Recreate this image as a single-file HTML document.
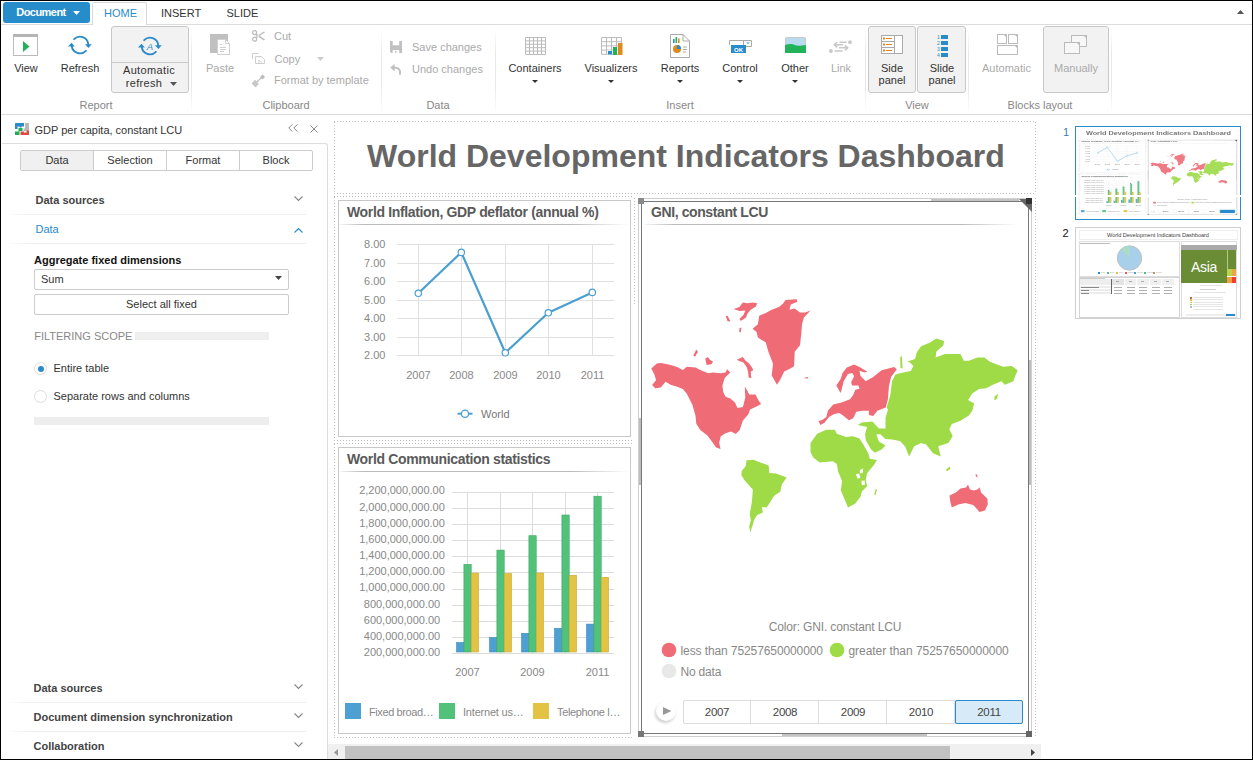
<!DOCTYPE html>
<html><head><meta charset="utf-8"><style>
html,body{margin:0;padding:0;}
body{width:1253px;height:760px;overflow:hidden;position:relative;background:#fff;font-family:"Liberation Sans", sans-serif;}
.t{position:absolute;white-space:nowrap;}
.r{position:absolute;}
#frame{position:absolute;left:0;top:0;width:1253px;height:760px;border:1px solid #000;box-sizing:border-box;z-index:100;pointer-events:none}
</style></head><body>
<div class="r" style="left:0px;top:24px;width:1253px;height:1px;background:#dcdcdc"></div>
<div class="r" style="left:92px;top:2px;width:55px;height:23px;background:#fff;border:1px solid #d8d8d8;border-bottom:none;box-sizing:border-box;border-radius:2px 2px 0 0"></div>
<div class="r" style="left:3px;top:2px;width:87px;height:21px;background:#268dca;border-radius:3px"></div>
<div class="t" style="left:16.3px;top:6.69px;font-size:11px;line-height:11px;color:#fff;font-weight:700;letter-spacing:-0.55px;">Document</div>
<svg class="r" style="left:73px;top:11px;" width="7" height="4" viewBox="0 0 7 4"><path d="M0 0H7L3.5 4Z" fill="#fff"/></svg>
<div class="t" style="left:104px;top:7.69px;font-size:11px;line-height:11px;color:#2a8bca;">HOME</div>
<div class="t" style="left:161px;top:7.69px;font-size:11px;line-height:11px;color:#333;">INSERT</div>
<div class="t" style="left:226.5px;top:7.69px;font-size:11px;line-height:11px;color:#333;">SLIDE</div>
<svg class="r" style="left:1237px;top:10px;" width="7" height="4" viewBox="0 0 7 4"><path d="M0 4H7L3.5 0Z" fill="#555"/></svg>
<div class="r" style="left:0px;top:114px;width:1253px;height:1px;background:#dcdcdc"></div>
<div class="r" style="left:191px;top:28px;width:1px;height:84px;background:linear-gradient(#fff,#e8e8e8 30%,#e8e8e8 70%,#fff)"></div>
<div class="r" style="left:381px;top:28px;width:1px;height:84px;background:linear-gradient(#fff,#e8e8e8 30%,#e8e8e8 70%,#fff)"></div>
<div class="r" style="left:495px;top:28px;width:1px;height:84px;background:linear-gradient(#fff,#e8e8e8 30%,#e8e8e8 70%,#fff)"></div>
<div class="r" style="left:865px;top:28px;width:1px;height:84px;background:linear-gradient(#fff,#e8e8e8 30%,#e8e8e8 70%,#fff)"></div>
<div class="r" style="left:968px;top:28px;width:1px;height:84px;background:linear-gradient(#fff,#e8e8e8 30%,#e8e8e8 70%,#fff)"></div>
<div class="r" style="left:1111px;top:28px;width:1px;height:84px;background:linear-gradient(#fff,#e8e8e8 30%,#e8e8e8 70%,#fff)"></div>
<div class="t" style="left:96px;top:99.69px;font-size:11px;line-height:11px;color:#888;width:120px;text-align:center;left:36.00px;">Report</div>
<div class="t" style="left:286px;top:99.69px;font-size:11px;line-height:11px;color:#888;width:120px;text-align:center;left:226.00px;">Clipboard</div>
<div class="t" style="left:438px;top:99.69px;font-size:11px;line-height:11px;color:#888;width:120px;text-align:center;left:378.00px;">Data</div>
<div class="t" style="left:680px;top:99.69px;font-size:11px;line-height:11px;color:#888;width:120px;text-align:center;left:620.00px;">Insert</div>
<div class="t" style="left:917px;top:99.69px;font-size:11px;line-height:11px;color:#888;width:120px;text-align:center;left:857.00px;">View</div>
<div class="t" style="left:1040px;top:99.69px;font-size:11px;line-height:11px;color:#888;width:120px;text-align:center;left:980.00px;">Blocks layout</div>
<div class="r" style="left:13px;top:34px;width:25px;height:22px;border:1px solid #bbb;box-sizing:border-box;background:#fff"></div>
<div class="r" style="left:13px;top:34px;width:25px;height:3px;background:#b5b5b5"></div>
<svg class="r" style="left:23px;top:41px;" width="7" height="11" viewBox="0 0 7 11"><path d="M0 0L6.5 5.5L0 11Z" fill="#22b35a"/></svg>
<div class="t" style="left:26px;top:62.69px;font-size:11px;line-height:11px;color:#333;width:60px;text-align:center;left:-4.00px;">View</div>
<svg class="r" style="left:68px;top:34px;" width="24" height="22" viewBox="0 0 24 22"><g fill="none" stroke="#2a8bca" stroke-width="1.9" stroke-linecap="round"><path d="M6.13 5.13A8.3 8.3 0 0 1 20.27 10.1"/><path d="M17.87 16.87A8.3 8.3 0 0 1 3.73 11.9"/></g><path d="M17 10.2H23.8L20.4 13.9Z" fill="#2a8bca"/><path d="M0 12.4H6.9L3.45 8.8Z" fill="#2a8bca"/></svg>
<div class="t" style="left:80px;top:62.69px;font-size:11px;line-height:11px;color:#333;width:60px;text-align:center;left:50.00px;">Refresh</div>
<div class="r" style="left:111px;top:26px;width:78px;height:67px;background:#f2f2f2;border:1px solid #c8c8c8;box-sizing:border-box;border-radius:3px"></div>
<div class="r" style="left:112px;top:62px;width:76px;height:1px;background:#c8c8c8"></div>
<svg class="r" style="left:138px;top:35px;" width="24" height="22" viewBox="0 0 24 22"><g fill="none" stroke="#2a8bca" stroke-width="1.9" stroke-linecap="round"><path d="M6.13 5.13A8.3 8.3 0 0 1 20.27 10.1"/><path d="M17.87 16.87A8.3 8.3 0 0 1 3.73 11.9"/></g><path d="M17 10.2H23.8L20.4 13.9Z" fill="#2a8bca"/><path d="M0 12.4H6.9L3.45 8.8Z" fill="#2a8bca"/><text x="12" y="14.6" font-family="Liberation Sans" font-size="9.5" font-style="italic" fill="#2a8bca" text-anchor="middle">A</text></svg>
<div class="t" style="left:149px;top:64.69px;font-size:11px;line-height:11px;color:#333;letter-spacing:0.35px;width:70px;text-align:center;left:114.00px;">Automatic</div>
<div class="t" style="left:144px;top:78.09px;font-size:11px;line-height:11px;color:#333;letter-spacing:0.3px;width:60px;text-align:center;left:114.00px;">refresh</div>
<svg class="r" style="left:170px;top:82px;" width="7" height="4" viewBox="0 0 7 4"><path d="M0 0H7L3.5 4Z" fill="#555"/></svg>
<svg class="r" style="left:210px;top:34px;" width="21" height="21" viewBox="0 0 21 21"><rect x="0" y="0" width="18" height="19" fill="#c0c0c0"/><path d="M7.5 5.5H15.5L19.5 9.5V20.5H7.5Z" fill="#fff" stroke="#d0d0d0" stroke-width="1"/><path d="M15.5 5.5V9.5H19.5" fill="none" stroke="#d0d0d0"/><path d="M10 10.5H12M10 13.5H16M10 15.5H16M10 17.5H14" stroke="#cfcfcf" stroke-width="1"/></svg>
<div class="t" style="left:220px;top:62.69px;font-size:11px;line-height:11px;color:#aaa;width:60px;text-align:center;left:190.00px;">Paste</div>
<svg class="r" style="left:252px;top:30px;" width="14" height="12" viewBox="0 0 14 12"><g fill="none" stroke="#bbb" stroke-width="1.2"><circle cx="2.6" cy="2.6" r="2"/><circle cx="2.6" cy="9.2" r="2"/></g><path d="M4.2 3.6L13 9.6L12 10.4L4 5.4ZM4.2 8.2L13 2.2L12 1.4L4 6.4Z" fill="#bbb"/></svg>
<div class="t" style="left:274px;top:30.69px;font-size:11px;line-height:11px;color:#aaa;">Cut</div>
<svg class="r" style="left:252px;top:53px;" width="14" height="12" viewBox="0 0 14 12"><g fill="none" stroke="#cfcfcf" stroke-width="1"><path d="M0.5 6V0.5H6.5"/><path d="M3.5 3.5H9.5L12.5 6.5V10.5H3.5Z" fill="#fff"/></g><path d="M6 7.5H8M6 9H10" stroke="#d5d5d5"/></svg>
<div class="t" style="left:274.5px;top:53.69px;font-size:11px;line-height:11px;color:#aaa;">Copy</div>
<svg class="r" style="left:317px;top:57px;" width="7" height="4" viewBox="0 0 7 4"><path d="M0 0H7L3.5 4Z" fill="#ccc"/></svg>
<svg class="r" style="left:251px;top:73px;" width="15" height="15" viewBox="0 0 15 15"><path d="M11.5 1.5L14 4L11.5 6.5L9 4Z" fill="#bbb"/><path d="M10 5L5.5 9.5L3.5 7.5" fill="none" stroke="#bbb" stroke-width="1.1"/><path d="M4 7L8 11L4.5 14.5L0.5 10.5Z" fill="#c8c8c8"/></svg>
<div class="t" style="left:274px;top:74.69px;font-size:11px;line-height:11px;color:#aaa;">Format by template</div>
<svg class="r" style="left:390px;top:41px;" width="12" height="12" viewBox="0 0 12 12"><path d="M0 0H12V12H1.5L0 10.5Z" fill="#c0c0c0"/><rect x="2.7" y="0" width="6.5" height="4.3" fill="#fff"/><rect x="2.7" y="9" width="6.5" height="3" fill="#fff"/><rect x="5.2" y="9.8" width="1.2" height="2.2" fill="#c0c0c0"/></svg>
<div class="t" style="left:412px;top:41.69px;font-size:11px;line-height:11px;color:#aaa;">Save changes</div>
<svg class="r" style="left:390px;top:64px;" width="12" height="11" viewBox="0 0 12 11"><path d="M0.2 3.6L4.6 0V7.4Z" fill="#c0c0c0"/><path d="M4 3.7H5.5A4.5 4.5 0 0 1 10 8.2V10.8" fill="none" stroke="#c0c0c0" stroke-width="2"/></svg>
<div class="t" style="left:412px;top:63.69px;font-size:11px;line-height:11px;color:#aaa;">Undo changes</div>
<svg class="r" style="left:525px;top:37px;" width="21" height="18" viewBox="0 0 21 18"><g fill="none" stroke="#bbb" stroke-width="1"><path d="M0.5 0.5H20.5"/><path d="M0.5 3.9H20.5"/><path d="M0.5 7.3H20.5"/><path d="M0.5 10.7H20.5"/><path d="M0.5 14.1H20.5"/><path d="M0.5 17.5H20.5"/><path d="M0.5 0.5V17.5"/><path d="M4.5 0.5V17.5"/><path d="M8.5 0.5V17.5"/><path d="M12.5 0.5V17.5"/><path d="M16.5 0.5V17.5"/><path d="M20.5 0.5V17.5"/></g></svg>
<div class="t" style="left:535px;top:62.69px;font-size:11px;line-height:11px;color:#333;width:80px;text-align:center;left:495.00px;">Containers</div>
<svg class="r" style="left:532px;top:80px;" width="6" height="3" viewBox="0 0 6 3"><path d="M0 0H6L3 3Z" fill="#333"/></svg>
<svg class="r" style="left:601px;top:37px;" width="22" height="18" viewBox="0 0 22 18"><g fill="none" stroke="#bbb" stroke-width="1"><path d="M0.5 0.5H20.5"/><path d="M0.5 4.7H20.5"/><path d="M0.5 8.9H20.5"/><path d="M0.5 13.1H20.5"/><path d="M0.5 17.3H20.5"/><path d="M0.5 0.5V17.3"/><path d="M5.5 0.5V17.3"/><path d="M10.5 0.5V17.3"/><path d="M15.5 0.5V17.3"/><path d="M20.5 0.5V17.3"/></g><rect x="6.5" y="13.5" width="4" height="4" fill="#fff"/><rect x="7" y="14" width="4" height="3.5" fill="#2a8bca"/><rect x="12" y="10" width="4" height="8" fill="#22b35a"/><rect x="17" y="6" width="4.5" height="12" fill="#e08a1e"/></svg>
<div class="t" style="left:611px;top:62.69px;font-size:11px;line-height:11px;color:#333;width:80px;text-align:center;left:571.00px;">Visualizers</div>
<svg class="r" style="left:608px;top:80px;" width="6" height="3" viewBox="0 0 6 3"><path d="M0 0H6L3 3Z" fill="#333"/></svg>
<svg class="r" style="left:670px;top:34px;" width="20" height="24" viewBox="0 0 20 24"><path d="M0.5 0.5H13L19.5 7V23.5H0.5Z" fill="#fff" stroke="#aaa"/><path d="M13 0.5V7H19.5" fill="none" stroke="#aaa"/><rect x="3" y="5" width="1.6" height="4" fill="#2a8bca"/><rect x="5.5" y="3" width="1.6" height="6" fill="#22b35a"/><rect x="8" y="4.5" width="1.6" height="4.5" fill="#e08a1e"/><circle cx="7" cy="15" r="4" fill="#e08a1e"/><path d="M7 15V11A4 4 0 0 1 11 15Z" fill="#2a8bca"/><path d="M13 13H17M13 15.5H17M13 18H16" stroke="#aaa"/></svg>
<div class="t" style="left:680px;top:62.69px;font-size:11px;line-height:11px;color:#333;width:80px;text-align:center;left:640.00px;">Reports</div>
<svg class="r" style="left:677px;top:80px;" width="6" height="3" viewBox="0 0 6 3"><path d="M0 0H6L3 3Z" fill="#333"/></svg>
<svg class="r" style="left:729px;top:40px;" width="24" height="14" viewBox="0 0 24 14"><path d="M0.5 5V0.5H22.5V6.5H17M14.5 0.5V5" fill="none" stroke="#aaa"/><path d="M17.5 2.5H20.5L19 4Z" fill="#2a8bca"/><rect x="2" y="5" width="15" height="8" fill="#2a8bca"/><text x="9.5" y="11.5" font-family="Liberation Sans" font-size="6" font-weight="bold" fill="#fff" text-anchor="middle">OK</text></svg>
<div class="t" style="left:740px;top:62.69px;font-size:11px;line-height:11px;color:#333;width:80px;text-align:center;left:700.00px;">Control</div>
<svg class="r" style="left:737px;top:80px;" width="6" height="3" viewBox="0 0 6 3"><path d="M0 0H6L3 3Z" fill="#333"/></svg>
<svg class="r" style="left:785px;top:37px;" width="21" height="16" viewBox="0 0 21 16"><rect x="0.5" y="0.5" width="20" height="15" rx="1" fill="#b9dbf0" stroke="#c8c8c8"/><path d="M0 8C4 6.5 7 6.5 10.5 8.3C13 9.3 16 8.5 21 8V16H0Z" fill="#22b35a"/></svg>
<div class="t" style="left:795px;top:62.69px;font-size:11px;line-height:11px;color:#333;width:80px;text-align:center;left:755.00px;">Other</div>
<svg class="r" style="left:792px;top:80px;" width="6" height="3" viewBox="0 0 6 3"><path d="M0 0H6L3 3Z" fill="#333"/></svg>
<svg class="r" style="left:829px;top:40px;" width="23" height="13" viewBox="0 0 23 13"><g fill="none" stroke="#c8c8c8" stroke-width="1.5"><path d="M17.6 2.2H10.5M14 4.8H5.5M8.2 2.2L5.2 4.8L8.2 7.4M10 7.8H18.5M15.8 5.2L18.8 7.8L15.8 10.4M5.5 11H13.7"/></g><circle cx="21" cy="2.2" r="1.9" fill="#c8c8c8"/><circle cx="1.9" cy="11" r="1.9" fill="#c8c8c8"/></svg>
<div class="t" style="left:841px;top:62.69px;font-size:11px;line-height:11px;color:#aaa;width:60px;text-align:center;left:811.00px;">Link</div>
<div class="r" style="left:868px;top:26px;width:48px;height:67px;background:#f2f2f2;border:1px solid #c8c8c8;box-sizing:border-box;border-radius:3px"></div>
<div class="r" style="left:917px;top:26px;width:49px;height:67px;background:#f2f2f2;border:1px solid #c8c8c8;box-sizing:border-box;border-radius:3px"></div>
<svg class="r" style="left:881px;top:35px;" width="22" height="19" viewBox="0 0 22 19"><rect x="0.5" y="0.5" width="21" height="18" fill="#fff" stroke="#aaa"/><path d="M13.5 0.5V18.5M0.5 6.5H13.5M0.5 12.5H13.5" stroke="#aaa"/><g fill="#e08a1e"><rect x="2" y="2.5" width="2" height="2"/><rect x="2" y="8.5" width="2" height="2"/><rect x="2" y="14.5" width="2" height="2"/><rect x="5" y="3" width="6" height="1"/><rect x="5" y="9" width="6" height="1"/><rect x="5" y="15" width="6" height="1"/></g></svg>
<div class="t" style="left:892px;top:62.69px;font-size:11px;line-height:11px;color:#333;width:50px;text-align:center;left:867.00px;">Side</div>
<div class="t" style="left:892px;top:75.29px;font-size:11px;line-height:11px;color:#333;width:50px;text-align:center;left:867.00px;">panel</div>
<svg class="r" style="left:936px;top:35px;" width="12" height="22" viewBox="0 0 12 22"><g fill="#2a8bca"><rect x="5" y="0" width="7" height="4"/><rect x="5" y="6" width="7" height="4"/><rect x="5" y="12" width="7" height="4"/><rect x="5" y="18" width="7" height="4"/></g><g font-family="Liberation Sans" font-size="5" fill="#2a8bca"><text x="1" y="4">1</text><text x="1" y="10">2</text><text x="1" y="16">3</text><text x="1" y="22">4</text></g></svg>
<div class="t" style="left:942px;top:62.69px;font-size:11px;line-height:11px;color:#333;width:50px;text-align:center;left:917.00px;">Slide</div>
<div class="t" style="left:942px;top:75.29px;font-size:11px;line-height:11px;color:#333;width:50px;text-align:center;left:917.00px;">panel</div>
<svg class="r" style="left:997px;top:34px;" width="22" height="22" viewBox="0 0 22 22"><g fill="#fff" stroke="#bbb"><rect x="0.5" y="0.5" width="9" height="9"/><rect x="11.5" y="0.5" width="9" height="9"/><rect x="0.5" y="11.5" width="20" height="9"/></g><g fill="#bbb"><path d="M6.5 0.5H9.5V3.5Z"/><path d="M17.5 0.5H20.5V3.5Z"/><path d="M17.5 11.5H20.5V14.5Z"/></g></svg>
<div class="t" style="left:1006.5px;top:62.69px;font-size:11px;line-height:11px;color:#aaa;width:70px;text-align:center;left:971.50px;">Automatic</div>
<div class="r" style="left:1043px;top:26px;width:66px;height:67px;background:#f2f2f2;border:1px solid #c8c8c8;box-sizing:border-box;border-radius:3px"></div>
<svg class="r" style="left:1064px;top:35px;" width="24" height="20" viewBox="0 0 24 20"><rect x="7.5" y="0.5" width="15" height="11" fill="#f7f7f7" stroke="#bbb"/><path d="M19.5 0.5H22.5V3.5Z" fill="#bbb"/><rect x="0.5" y="7.5" width="15" height="11" fill="#f7f7f7" stroke="#bbb"/><path d="M12.5 7.5H15.5V10.5Z" fill="#bbb"/></svg>
<div class="t" style="left:1076px;top:62.69px;font-size:11px;line-height:11px;color:#aaa;width:70px;text-align:center;left:1041.00px;">Manually</div>
<svg class="r" style="left:15px;top:123px;" width="14" height="12" viewBox="0 0 14 12"><path d="M0 0.5Q0 0 0.5 0H9V3.5H6.5V4.5H4.5V3.5H2.5V6H0Z" fill="#2a8bca"/><path d="M10 0H14V8H8.5V5.5H10Z" fill="#b8b8b8"/><path d="M3.5 5H7.5V8H4.5V12H0V8.5H3.5Z" fill="#1db054"/><path d="M5.5 8.5H9V9.5H11.5V7.5H14V11.5Q14 12 13.5 12H5.5Z" fill="#e34848"/></svg>
<div class="t" style="left:34.5px;top:124.69px;font-size:11px;line-height:11px;color:#333;">GDP per capita, constant LCU</div>
<svg class="r" style="left:288px;top:124px;" width="10" height="8" viewBox="0 0 10 8"><path d="M4.5 0.3L0.8 4L4.5 7.7M9.5 0.3L5.8 4L9.5 7.7" fill="none" stroke="#888" stroke-width="1"/></svg>
<svg class="r" style="left:309.5px;top:124.5px;" width="8" height="8" viewBox="0 0 8 8"><path d="M0.5 0.5L7.5 7.5M7.5 0.5L0.5 7.5" fill="none" stroke="#808080" stroke-width="0.9"/></svg>
<div class="r" style="left:2px;top:143px;width:326px;height:617px;border-top:1px solid #ddd;border-right:1px solid #ddd;border-top-right-radius:3px;box-sizing:border-box"></div>
<div class="r" style="left:20px;top:150px;width:293px;height:21px;border:1px solid #ccc;box-sizing:border-box;border-radius:2px;background:#fff"></div>
<div class="r" style="left:21px;top:151px;width:72px;height:19px;background:#f0f0f0"></div>
<div class="r" style="left:93px;top:151px;width:1px;height:19px;background:#ccc"></div>
<div class="r" style="left:166px;top:151px;width:1px;height:19px;background:#ccc"></div>
<div class="r" style="left:239px;top:151px;width:1px;height:19px;background:#ccc"></div>
<div class="t" style="left:57px;top:154.69px;font-size:11px;line-height:11px;color:#333;width:70px;text-align:center;left:22.00px;">Data</div>
<div class="t" style="left:130px;top:154.69px;font-size:11px;line-height:11px;color:#333;width:70px;text-align:center;left:95.00px;">Selection</div>
<div class="t" style="left:203px;top:154.69px;font-size:11px;line-height:11px;color:#333;width:70px;text-align:center;left:168.00px;">Format</div>
<div class="t" style="left:276px;top:154.69px;font-size:11px;line-height:11px;color:#333;width:70px;text-align:center;left:241.00px;">Block</div>
<div class="t" style="left:35.5px;top:194.69px;font-size:11px;line-height:11px;color:#444;font-weight:700;">Data sources</div>
<svg class="r" style="left:293.5px;top:196px;" width="9" height="6" viewBox="0 0 9 6"><path d="M0.5 0.5L4.5 4.5L8.5 0.5" fill="none" stroke="#888" stroke-width="1.1"/></svg>
<div class="r" style="left:7px;top:214px;width:299px;height:1px;background:linear-gradient(90deg,#fff,#eee 8%,#eee)"></div>
<div class="t" style="left:35.5px;top:223.69px;font-size:11px;line-height:11px;color:#2a8bca;">Data</div>
<svg class="r" style="left:293.5px;top:227px;" width="9" height="6" viewBox="0 0 9 6"><path d="M0.5 5.5L4.5 1.5L8.5 5.5" fill="none" stroke="#2a8bca" stroke-width="1.1"/></svg>
<div class="r" style="left:7px;top:243px;width:299px;height:1px;background:linear-gradient(90deg,#fff,#eee 8%,#eee)"></div>
<div class="t" style="left:34px;top:254.99px;font-size:11px;line-height:11px;color:#111;font-weight:700;">Aggregate fixed dimensions</div>
<div class="r" style="left:34px;top:269px;width:255px;height:21px;border:1px solid #ccc;box-sizing:border-box;border-radius:2px;background:#fff"></div>
<div class="t" style="left:41px;top:274.19px;font-size:11px;line-height:11px;color:#333;">Sum</div>
<svg class="r" style="left:275px;top:276px;" width="7" height="4" viewBox="0 0 7 4"><path d="M0 0H7L3.5 4Z" fill="#444"/></svg>
<div class="r" style="left:34px;top:294px;width:255px;height:21px;border:1px solid #ccc;box-sizing:border-box;border-radius:2px;background:#fff"></div>
<div class="t" style="left:161.5px;top:298.69px;font-size:11px;line-height:11px;color:#333;width:200px;text-align:center;left:61.50px;">Select all fixed</div>
<div class="t" style="left:34.2px;top:330.69px;font-size:11px;line-height:11px;color:#888;">FILTERING SCOPE</div>
<div class="r" style="left:135px;top:332px;width:134px;height:8px;background:#eee"></div>
<div class="r" style="left:34px;top:362px;width:13px;height:13px;border:1px solid #ddd;border-radius:50%;box-sizing:border-box;background:#fff"></div>
<div class="r" style="left:37.5px;top:365.5px;width:6px;height:6px;border-radius:50%;background:#2a8bca"></div>
<div class="t" style="left:53.5px;top:363.19px;font-size:11px;line-height:11px;color:#333;">Entire table</div>
<div class="r" style="left:34px;top:390px;width:13px;height:13px;border:1px solid #ddd;border-radius:50%;box-sizing:border-box;background:#fff"></div>
<div class="t" style="left:53.5px;top:391.19px;font-size:11px;line-height:11px;color:#333;">Separate rows and columns</div>
<div class="r" style="left:34px;top:417px;width:235px;height:8px;background:#eee"></div>
<div class="t" style="left:33.5px;top:683.19px;font-size:11px;line-height:11px;color:#444;font-weight:700;">Data sources</div>
<svg class="r" style="left:294px;top:684px;" width="9" height="6" viewBox="0 0 9 6"><path d="M0.5 0.5L4.5 4.5L8.5 0.5" fill="none" stroke="#888" stroke-width="1.1"/></svg>
<div class="r" style="left:5px;top:702px;width:301px;height:1px;background:linear-gradient(90deg,#fff,#eee 8%,#eee)"></div>
<div class="t" style="left:33.5px;top:712.19px;font-size:11px;line-height:11px;color:#444;font-weight:700;">Document dimension synchronization</div>
<svg class="r" style="left:294px;top:713px;" width="9" height="6" viewBox="0 0 9 6"><path d="M0.5 0.5L4.5 4.5L8.5 0.5" fill="none" stroke="#888" stroke-width="1.1"/></svg>
<div class="r" style="left:5px;top:731px;width:301px;height:1px;background:linear-gradient(90deg,#fff,#eee 8%,#eee)"></div>
<div class="t" style="left:33.5px;top:741.19px;font-size:11px;line-height:11px;color:#444;font-weight:700;">Collaboration</div>
<svg class="r" style="left:294px;top:742px;" width="9" height="6" viewBox="0 0 9 6"><path d="M0.5 0.5L4.5 4.5L8.5 0.5" fill="none" stroke="#888" stroke-width="1.1"/></svg>
<div class="r" style="left:334px;top:121px;width:702px;height:1px;background:repeating-linear-gradient(90deg,#bdbdbd 0 1px,transparent 1px 3px)"></div>
<div class="r" style="left:334px;top:193px;width:702px;height:1px;background:repeating-linear-gradient(90deg,#bdbdbd 0 1px,transparent 1px 3px)"></div>
<div class="r" style="left:334px;top:122px;width:1px;height:72px;background:repeating-linear-gradient(180deg,#bdbdbd 0 1px,transparent 1px 3px)"></div>
<div class="r" style="left:1035px;top:122px;width:1px;height:72px;background:repeating-linear-gradient(180deg,#bdbdbd 0 1px,transparent 1px 3px)"></div>
<div class="t" style="left:367px;top:140.41px;font-size:32px;line-height:32px;color:#666;font-weight:700;">World Development Indicators Dashboard</div>
<div class="r" style="left:334px;top:196px;width:298px;height:1px;background:repeating-linear-gradient(90deg,#bdbdbd 0 1px,transparent 1px 3px)"></div>
<div class="r" style="left:334px;top:440px;width:298px;height:1px;background:repeating-linear-gradient(90deg,#bdbdbd 0 1px,transparent 1px 3px)"></div>
<div class="r" style="left:334px;top:197px;width:1px;height:244px;background:repeating-linear-gradient(180deg,#bdbdbd 0 1px,transparent 1px 3px)"></div>
<div class="r" style="left:338px;top:200px;width:293px;height:237px;border:1px solid #c8c8c8;box-sizing:border-box;background:#fff"></div>
<div class="t" style="left:347px;top:205.15px;font-size:14px;line-height:14px;color:#5a5a5a;font-weight:700;letter-spacing:-0.35px;">World Inflation, GDP deflator (annual %)</div>
<div class="r" style="left:340px;top:224px;width:289px;height:1px;background:linear-gradient(90deg,rgba(190,190,190,0.2),#bbb 8%,#bbb 80%,rgba(190,190,190,0))"></div>
<svg class="r" style="left:0px;top:0px;pointer-events:none" width="1253" height="760" viewBox="0 0 1253 760"><path d="M397 244.5H614" stroke="#e0e0e0" stroke-width="1"/><path d="M397 263.5H614" stroke="#e0e0e0" stroke-width="1"/><path d="M397 281.5H614" stroke="#e0e0e0" stroke-width="1"/><path d="M397 300.5H614" stroke="#e0e0e0" stroke-width="1"/><path d="M397 318.5H614" stroke="#e0e0e0" stroke-width="1"/><path d="M397 337.5H614" stroke="#e0e0e0" stroke-width="1"/><path d="M397 355.5H614" stroke="#e0e0e0" stroke-width="1"/><path d="M418.5 244V356" stroke="#e0e0e0" stroke-width="1"/><path d="M461.5 244V356" stroke="#e0e0e0" stroke-width="1"/><path d="M505.5 244V356" stroke="#e0e0e0" stroke-width="1"/><path d="M548.5 244V356" stroke="#e0e0e0" stroke-width="1"/><path d="M592.5 244V356" stroke="#e0e0e0" stroke-width="1"/><polyline points="418.3,293.3 461.3,252.4 505.3,352.8 548.3,312.8 592.3,292.4" fill="none" stroke="#4b9fd0" stroke-width="2.2" stroke-linejoin="round"/><circle cx="418.3" cy="293.3" r="3.2" fill="#fff" stroke="#4b9fd0" stroke-width="1.2"/><circle cx="461.3" cy="252.4" r="3.2" fill="#fff" stroke="#4b9fd0" stroke-width="1.2"/><circle cx="505.3" cy="352.8" r="3.2" fill="#fff" stroke="#4b9fd0" stroke-width="1.2"/><circle cx="548.3" cy="312.8" r="3.2" fill="#fff" stroke="#4b9fd0" stroke-width="1.2"/><circle cx="592.3" cy="292.4" r="3.2" fill="#fff" stroke="#4b9fd0" stroke-width="1.2"/><path d="M457.5 413.7H472.5" stroke="#4b9fd0" stroke-width="2"/><circle cx="465" cy="413.7" r="3.6" fill="#fff" stroke="#4b9fd0" stroke-width="1.3"/></svg>
<div class="t" style="left:385.5px;top:238.59px;font-size:11px;line-height:11px;color:#888;width:40px;text-align:right;left:345.50px;">8.00</div>
<div class="t" style="left:385.5px;top:257.59px;font-size:11px;line-height:11px;color:#888;width:40px;text-align:right;left:345.50px;">7.00</div>
<div class="t" style="left:385.5px;top:275.59px;font-size:11px;line-height:11px;color:#888;width:40px;text-align:right;left:345.50px;">6.00</div>
<div class="t" style="left:385.5px;top:294.59px;font-size:11px;line-height:11px;color:#888;width:40px;text-align:right;left:345.50px;">5.00</div>
<div class="t" style="left:385.5px;top:312.59px;font-size:11px;line-height:11px;color:#888;width:40px;text-align:right;left:345.50px;">4.00</div>
<div class="t" style="left:385.5px;top:331.59px;font-size:11px;line-height:11px;color:#888;width:40px;text-align:right;left:345.50px;">3.00</div>
<div class="t" style="left:385.5px;top:349.59px;font-size:11px;line-height:11px;color:#888;width:40px;text-align:right;left:345.50px;">2.00</div>
<div class="t" style="left:418.5px;top:369.69px;font-size:11px;line-height:11px;color:#888;width:40px;text-align:center;left:398.50px;">2007</div>
<div class="t" style="left:461.5px;top:369.69px;font-size:11px;line-height:11px;color:#888;width:40px;text-align:center;left:441.50px;">2008</div>
<div class="t" style="left:505.5px;top:369.69px;font-size:11px;line-height:11px;color:#888;width:40px;text-align:center;left:485.50px;">2009</div>
<div class="t" style="left:548.5px;top:369.69px;font-size:11px;line-height:11px;color:#888;width:40px;text-align:center;left:528.50px;">2010</div>
<div class="t" style="left:592.5px;top:369.69px;font-size:11px;line-height:11px;color:#888;width:40px;text-align:center;left:572.50px;">2011</div>
<div class="t" style="left:481px;top:409.49px;font-size:11px;line-height:11px;color:#777;">World</div>
<div class="r" style="left:334px;top:443px;width:298px;height:1px;background:repeating-linear-gradient(90deg,#bdbdbd 0 1px,transparent 1px 3px)"></div>
<div class="r" style="left:334px;top:737px;width:298px;height:1px;background:repeating-linear-gradient(90deg,#bdbdbd 0 1px,transparent 1px 3px)"></div>
<div class="r" style="left:334px;top:444px;width:1px;height:294px;background:repeating-linear-gradient(180deg,#bdbdbd 0 1px,transparent 1px 3px)"></div>
<div class="r" style="left:338px;top:447px;width:293px;height:287px;border:1px solid #c8c8c8;box-sizing:border-box;background:#fff"></div>
<div class="t" style="left:347px;top:452.15px;font-size:14px;line-height:14px;color:#5a5a5a;font-weight:700;letter-spacing:-0.35px;">World Communication statistics</div>
<div class="r" style="left:340px;top:471px;width:289px;height:1px;background:linear-gradient(90deg,rgba(190,190,190,0.2),#bbb 8%,#bbb 80%,rgba(190,190,190,0))"></div>
<svg class="r" style="left:0px;top:0px;pointer-events:none" width="1253" height="760" viewBox="0 0 1253 760"><path d="M452 492.5H614" stroke="#dcdcdc" stroke-width="1"/><path d="M452 508.5H614" stroke="#dcdcdc" stroke-width="1"/><path d="M452 524.5H614" stroke="#dcdcdc" stroke-width="1"/><path d="M452 540.5H614" stroke="#dcdcdc" stroke-width="1"/><path d="M452 556.5H614" stroke="#dcdcdc" stroke-width="1"/><path d="M452 572.5H614" stroke="#dcdcdc" stroke-width="1"/><path d="M452 589.5H614" stroke="#dcdcdc" stroke-width="1"/><path d="M452 605.5H614" stroke="#dcdcdc" stroke-width="1"/><path d="M452 621.5H614" stroke="#dcdcdc" stroke-width="1"/><path d="M452 637.5H614" stroke="#dcdcdc" stroke-width="1"/><path d="M452 653.5H614" stroke="#dcdcdc" stroke-width="1"/><path d="M467.5 492V653" stroke="#dcdcdc" stroke-width="1"/><path d="M500.5 492V653" stroke="#dcdcdc" stroke-width="1"/><path d="M532.5 492V653" stroke="#dcdcdc" stroke-width="1"/><path d="M565.5 492V653" stroke="#dcdcdc" stroke-width="1"/><path d="M597.5 492V653" stroke="#dcdcdc" stroke-width="1"/><rect x="456.5" y="642.5" width="7.3" height="9.5" fill="#4fa0d2" stroke="#3f8cbf" stroke-width="0.6"/><rect x="463.9" y="564.4" width="7.3" height="87.6" fill="#52c27a" stroke="#3aa862" stroke-width="0.6"/><rect x="471.3" y="573.1" width="7.3" height="78.9" fill="#e3c343" stroke="#d0a830" stroke-width="0.6"/><rect x="489.5" y="637.5" width="7.3" height="14.5" fill="#4fa0d2" stroke="#3f8cbf" stroke-width="0.6"/><rect x="496.9" y="550.1" width="7.3" height="101.9" fill="#52c27a" stroke="#3aa862" stroke-width="0.6"/><rect x="504.3" y="573.6" width="7.3" height="78.4" fill="#e3c343" stroke="#d0a830" stroke-width="0.6"/><rect x="521.5" y="633.3" width="7.3" height="18.7" fill="#4fa0d2" stroke="#3f8cbf" stroke-width="0.6"/><rect x="528.9" y="535.7" width="7.3" height="116.3" fill="#52c27a" stroke="#3aa862" stroke-width="0.6"/><rect x="536.3" y="573" width="7.3" height="79.0" fill="#e3c343" stroke="#d0a830" stroke-width="0.6"/><rect x="554.5" y="628.3" width="7.3" height="23.7" fill="#4fa0d2" stroke="#3f8cbf" stroke-width="0.6"/><rect x="561.9" y="515" width="7.3" height="137.0" fill="#52c27a" stroke="#3aa862" stroke-width="0.6"/><rect x="569.3" y="575.3" width="7.3" height="76.7" fill="#e3c343" stroke="#d0a830" stroke-width="0.6"/><rect x="586.5" y="624.1" width="7.3" height="27.9" fill="#4fa0d2" stroke="#3f8cbf" stroke-width="0.6"/><rect x="593.9" y="496.2" width="7.3" height="155.8" fill="#52c27a" stroke="#3aa862" stroke-width="0.6"/><rect x="601.3" y="577.3" width="7.3" height="74.7" fill="#e3c343" stroke="#d0a830" stroke-width="0.6"/><rect x="345" y="703" width="16" height="16" fill="#4fa0d2"/><rect x="439" y="703" width="16" height="16" fill="#52c27a"/><rect x="533" y="703" width="16" height="16" fill="#e3c343"/></svg>
<div class="t" style="left:402px;top:485.39px;font-size:11px;line-height:11px;color:#888;width:120px;text-align:center;left:342.00px;">2,200,000,000.00</div>
<div class="t" style="left:402px;top:501.55px;font-size:11px;line-height:11px;color:#888;width:120px;text-align:center;left:342.00px;">2,000,000,000.00</div>
<div class="t" style="left:402px;top:517.71px;font-size:11px;line-height:11px;color:#888;width:120px;text-align:center;left:342.00px;">1,800,000,000.00</div>
<div class="t" style="left:402px;top:533.87px;font-size:11px;line-height:11px;color:#888;width:120px;text-align:center;left:342.00px;">1,600,000,000.00</div>
<div class="t" style="left:402px;top:550.03px;font-size:11px;line-height:11px;color:#888;width:120px;text-align:center;left:342.00px;">1,400,000,000.00</div>
<div class="t" style="left:402px;top:566.19px;font-size:11px;line-height:11px;color:#888;width:120px;text-align:center;left:342.00px;">1,200,000,000.00</div>
<div class="t" style="left:402px;top:582.35px;font-size:11px;line-height:11px;color:#888;width:120px;text-align:center;left:342.00px;">1,000,000,000.00</div>
<div class="t" style="left:402px;top:598.51px;font-size:11px;line-height:11px;color:#888;width:120px;text-align:center;left:342.00px;">800,000,000.00</div>
<div class="t" style="left:402px;top:614.67px;font-size:11px;line-height:11px;color:#888;width:120px;text-align:center;left:342.00px;">600,000,000.00</div>
<div class="t" style="left:402px;top:630.83px;font-size:11px;line-height:11px;color:#888;width:120px;text-align:center;left:342.00px;">400,000,000.00</div>
<div class="t" style="left:402px;top:646.99px;font-size:11px;line-height:11px;color:#888;width:120px;text-align:center;left:342.00px;">200,000,000.00</div>
<div class="t" style="left:467.5px;top:666.69px;font-size:11px;line-height:11px;color:#888;width:40px;text-align:center;left:447.50px;">2007</div>
<div class="t" style="left:532.5px;top:666.69px;font-size:11px;line-height:11px;color:#888;width:40px;text-align:center;left:512.50px;">2009</div>
<div class="t" style="left:597.5px;top:666.69px;font-size:11px;line-height:11px;color:#888;width:40px;text-align:center;left:577.50px;">2011</div>
<div class="t" style="left:369px;top:706.69px;font-size:11px;line-height:11px;color:#888;letter-spacing:-0.4px;">Fixed broad…</div>
<div class="t" style="left:463px;top:706.69px;font-size:11px;line-height:11px;color:#888;letter-spacing:-0.2px;">Internet us…</div>
<div class="t" style="left:557px;top:706.69px;font-size:11px;line-height:11px;color:#888;letter-spacing:-0.35px;">Telephone l…</div>
<div class="r" style="left:1035px;top:198px;width:1px;height:539px;background:repeating-linear-gradient(180deg,#bdbdbd 0 1px,transparent 1px 3px)"></div>
<div class="r" style="left:634px;top:198px;width:1px;height:108px;background:repeating-linear-gradient(180deg,#bdbdbd 0 1px,transparent 1px 3px)"></div>
<div class="r" style="left:638px;top:198px;width:394px;height:539px;border:1px solid #cfcfcf;box-sizing:border-box;background:#fff"></div>
<div class="r" style="left:641px;top:201px;width:388px;height:533px;border:1px solid #777;box-sizing:border-box"></div>
<div class="r" style="left:931px;top:199px;width:88px;height:2px;background:#c4c4c4"></div>
<div class="r" style="left:1029px;top:360px;width:2px;height:125px;background:#bdbdbd"></div>
<div class="r" style="left:639px;top:418px;width:2px;height:67px;background:#bdbdbd"></div>
<div class="r" style="left:782px;top:734px;width:145px;height:2px;background:#c4c4c4"></div>
<div class="r" style="left:638px;top:198px;width:6px;height:6px;background:#8a8a8a"></div>
<div class="r" style="left:638px;top:731px;width:6px;height:6px;background:#777"></div>
<div class="r" style="left:1026px;top:731px;width:6px;height:6px;background:#666"></div>
<svg class="r" style="left:1018px;top:198px;" width="14" height="14" viewBox="0 0 14 14"><path d="M1 1H14V14Z" fill="#666"/><rect x="8" y="0" width="6" height="6" fill="#333"/></svg>
<div class="t" style="left:651px;top:205.15px;font-size:14px;line-height:14px;color:#5a5a5a;font-weight:700;letter-spacing:-0.4px;">GNI, constant LCU</div>
<div class="r" style="left:645px;top:224px;width:373px;height:1px;background:linear-gradient(90deg,rgba(190,190,190,0.2),#bbb 8%,#bbb 85%,rgba(190,190,190,0))"></div>
<svg class="r" style="left:0px;top:0px;pointer-events:none" width="1253" height="760" viewBox="0 0 1253 760"><path d="M651.3 368.4 L656.8 363.4 L660.8 362.9 L668.7 364.5 L676.6 366.8 L682.9 370.0 L686.8 366.8 L695.5 367.6 L700.3 370.0 L708.2 373.2 L712.9 372.4 L720.8 373.2 L725.5 372.4 L727.1 369.2 L730.3 372.4 L727.1 375.5 L724.7 377.9 L722.4 385.8 L723.2 392.1 L725.5 396.8 L730.3 398.4 L735.0 402.4 L737.4 407.9 L742.9 407.1 L745.3 397.6 L744.8 386.6 L747.6 391.3 L749.2 394.5 L755.5 394.5 L758.7 400.8 L761.1 403.9 L755.5 407.1 L750.0 409.5 L748.4 414.2 L742.9 420.5 L739.7 430.0 L735.8 433.9 L731.1 431.6 L725.5 433.2 L720.8 436.3 L719.2 442.6 L720.5 448.9 L716.1 447.4 L712.1 441.8 L707.4 435.5 L700.3 430.0 L696.3 423.7 L695.5 415.8 L692.4 404.7 L686.8 393.7 L682.9 388.9 L676.6 386.6 L671.1 385.0 L665.5 381.8 L660.8 387.4 L655.3 388.2 L652.1 385.0 L656.1 380.3 L654.5 374.7Z M693.2 355.8 L696.3 349.5 L697.9 351.8 L695.2 356.6Z M752.6 328.8 L757.9 324.2 L759.2 315.7 L765.8 313.0 L771.7 309.7 L778.9 307.1 L782.9 303.8 L785.5 299.9 L792.1 299.5 L796.7 299.2 L797.4 301.8 L790.8 304.5 L789.5 309.7 L794.7 308.4 L800.0 312.4 L805.3 312.4 L810.5 310.4 L803.9 317.6 L802.0 324.2 L801.3 333.4 L800.0 345.3 L794.7 351.8 L794.1 366.3 L789.5 368.9 L784.2 371.6 L780.3 379.5 L777.0 384.7 L771.7 375.5 L773.0 363.7 L768.4 351.8 L765.8 342.6 L757.9 337.4 L756.6 332.1Z M733.6 309.1 L739.5 307.1 L742.8 302.5 L747.4 303.2 L752.6 302.5 L757.2 303.2 L755.9 306.4 L750.7 309.7 L747.4 313.7 L746.1 317.6 L740.8 320.9 L739.5 318.9 L743.4 315.0 L745.4 310.4 L739.5 311.1Z M725.7 316.3 L727.6 315.7 L730.5 321.6 L727.6 321.3Z M739.5 328.2 L741.4 327.5 L740.8 332.4 L739.2 331.8Z M736.8 359.7 L742.8 357.1 L745.4 360.4 L749.3 363.7 L752.0 367.6 L753.3 370.3 L750.7 371.6 L751.3 378.2 L748.7 377.5 L748.0 371.6 L746.7 367.0 L743.4 362.4 L738.2 360.4Z M705.3 358.4 L707.9 357.1 L709.9 359.7 L713.2 361.7 L711.2 364.3 L706.6 365.0 L705.9 361.7Z M803.9 377.9 L808.6 376.8 L807.2 378.8Z M818.4 421.3 L822.6 419.7 L826.3 417.1 L827.9 410.8 L833.2 404.5 L841.6 402.4 L850.0 399.2 L853.2 395.0 L855.3 389.7 L859.5 388.7 L858.4 385.5 L852.1 385.5 L851.1 382.4 L854.2 376.1 L852.1 372.9 L847.9 373.9 L843.7 381.3 L841.6 389.7 L840.5 392.9 L836.3 385.5 L840.5 379.2 L842.6 372.9 L846.8 367.6 L854.2 364.5 L859.5 367.1 L867.4 371.8 L864.7 372.4 L859.5 370.8 L860.5 376.1 L865.8 381.3 L873.2 377.1 L881.6 370.3 L894.2 367.1 L896.8 369.2 L891.1 377.1 L888.9 386.6 L887.9 399.2 L885.8 407.6 L877.4 410.8 L873.2 416.1 L868.9 415.0 L868.9 410.8 L862.6 410.8 L856.3 411.8 L853.2 418.2 L848.9 420.3 L843.7 416.1 L839.5 412.9 L834.2 413.9 L828.9 417.1 L824.7 422.4 L820.5 425.0Z M949.5 495.5 L955.8 492.4 L960.5 488.4 L966.1 487.6 L968.0 484.5 L970.0 489.6 L973.9 490.4 L977.9 489.2 L979.5 487.2 L981.1 492.4 L987.4 498.7 L987.8 504.2 L985.0 510.5 L979.5 512.1 L976.3 508.2 L973.2 505.0 L965.3 503.0 L958.2 504.6 L951.8 507.4 L950.3 501.8Z M975.5 474.2 L977.1 474.6 L977.5 477.4 L975.9 476.6Z" fill="#ef6b76"/><path d="M895.4 374.5 L902.2 372.8 L910.8 371.1 L913.4 365.9 L909.9 362.5 L907.4 361.6 L915.1 359.1 L916.8 352.2 L921.1 346.2 L929.6 342.8 L936.4 338.6 L944.1 341.1 L943.3 345.4 L936.4 351.4 L935.6 357.4 L945.0 353.9 L951.8 353.9 L960.4 353.9 L963.8 360.8 L968.9 360.8 L977.5 357.4 L984.3 357.4 L989.5 361.6 L996.3 364.2 L1003.2 366.8 L1011.7 365.9 L1017.7 370.2 L1015.1 376.2 L1013.4 381.3 L1004.9 384.7 L1001.4 381.3 L992.9 384.7 L986.1 388.2 L979.2 389.0 L972.4 393.3 L968.1 400.1 L974.1 403.6 L972.4 410.4 L968.9 415.5 L960.4 420.7 L951.8 424.1 L949.3 429.2 L952.7 436.1 L948.4 442.9 L938.2 446.3 L940.7 456.6 L933.0 453.2 L926.2 444.6 L921.1 442.9 L914.2 446.3 L909.1 456.6 L905.3 446.8 L900.0 440.9 L892.1 439.6 L885.5 438.9 L880.3 434.3 L876.3 434.3 L878.9 441.6 L885.5 445.5 L881.6 449.5 L875.0 452.8 L871.1 449.5 L865.8 440.3 L865.1 433.7 L867.1 427.1 L857.9 425.1 L861.8 422.5 L872.4 421.6 L878.9 428.4 L885.5 428.4 L885.5 417.9 L887.9 410.0 L886.8 407.0 L890.3 395.0 L892.0 381.3Z M900.2 357.4 L901.9 355.7 L902.6 368.5 L900.5 368.0Z M994.3 397.1 L998.0 393.6 L997.2 398.4 L994.6 400.5Z M810.5 442.9 L817.1 433.7 L826.3 429.7 L834.9 429.7 L836.8 433.7 L846.1 437.0 L852.6 436.3 L859.2 438.3 L863.2 444.2 L868.4 453.4 L869.7 458.7 L877.0 460.0 L873.7 465.3 L867.1 473.2 L865.8 479.7 L867.1 486.3 L861.8 491.6 L860.5 496.8 L855.3 503.4 L848.0 507.4 L844.7 499.5 L840.8 490.3 L842.1 481.1 L838.2 471.8 L836.8 463.9 L832.9 461.3 L819.7 462.6 L813.2 457.4 L810.5 452.1Z M875.7 488.9 L877.0 489.6 L875.3 495.5 L874.3 494.5Z M741.8 470.8 L745.5 466.6 L746.6 460.3 L753.4 459.7 L760.3 462.4 L768.7 465.5 L769.2 472.9 L776.1 473.4 L786.6 477.6 L781.8 484.5 L780.3 491.8 L773.9 496.1 L770.8 501.3 L766.6 507.6 L761.8 507.1 L762.9 512.4 L757.1 515.0 L753.9 520.3 L752.9 524.5 L751.8 527.6 L750.3 532.4 L749.2 526.6 L750.8 520.3 L749.7 513.9 L751.8 502.4 L752.9 489.7 L749.7 486.1 L744.5 480.3 L741.3 475.0Z M945.5 470.3 L947.9 467.9 L949.9 466.7 L950.3 468.7 L947.5 471.1Z" fill="#9edb47"/><path d="M859.9 469.9 L863.2 468.6 L862.9 472.5 L859.9 473.4Z M855.9 474.2 L859.2 473.4 L860.5 477.8 L857.6 478.7Z M861.4 480.8 L864.7 480.4 L865.1 484.7 L861.8 485.3Z" fill="#fff"/></svg>
<div class="t" style="left:835px;top:620.64px;font-size:12px;line-height:12px;color:#888;letter-spacing:-0.15px;width:200px;text-align:center;left:735.00px;">Color: GNI. constant LCU</div>
<svg class="r" style="left:661px;top:642px;" width="16" height="16" viewBox="0 0 16 16"><circle cx="8" cy="8" r="7.3" fill="#ef6b76"/></svg>
<div class="t" style="left:680.5px;top:645.14px;font-size:12px;line-height:12px;color:#888;letter-spacing:-0.1px;">less than 75257650000000</div>
<svg class="r" style="left:829px;top:642px;" width="16" height="16" viewBox="0 0 16 16"><circle cx="8" cy="8" r="7.3" fill="#9edb47"/></svg>
<div class="t" style="left:848.5px;top:645.14px;font-size:12px;line-height:12px;color:#888;letter-spacing:-0.05px;">greater than 75257650000000</div>
<svg class="r" style="left:661px;top:663px;" width="16" height="16" viewBox="0 0 16 16"><circle cx="8" cy="8" r="7.3" fill="#e8e8e8"/></svg>
<div class="t" style="left:680.5px;top:666.14px;font-size:12px;line-height:12px;color:#888;letter-spacing:-0.2px;">No data</div>
<div class="r" style="left:655.5px;top:700.5px;width:20.5px;height:20.5px;border-radius:50%;background:#fff;box-shadow:-1px 2px 3px rgba(0,0,0,0.2)"></div>
<svg class="r" style="left:663px;top:707px;" width="9" height="9" viewBox="0 0 9 9"><path d="M0 0L8.4 4L0 8Z" fill="#999"/></svg>
<div class="r" style="left:683px;top:700px;width:340px;height:24px;border:1px solid #dcdcdc;box-sizing:border-box;background:#fff;border-radius:2px"></div>
<div class="r" style="left:750px;top:701px;width:1px;height:22px;background:#dcdcdc"></div>
<div class="r" style="left:818px;top:701px;width:1px;height:22px;background:#dcdcdc"></div>
<div class="r" style="left:886px;top:701px;width:1px;height:22px;background:#dcdcdc"></div>
<div class="r" style="left:954px;top:701px;width:1px;height:22px;background:#dcdcdc"></div>
<div class="r" style="left:955px;top:700px;width:68px;height:24px;background:#d7eaf8;border:1.5px solid #2a8bca;box-sizing:border-box;border-radius:2px"></div>
<div class="t" style="left:717px;top:707.47px;font-size:11.5px;line-height:11.5px;color:#444;letter-spacing:-0.3px;width:60px;text-align:center;left:687.00px;">2007</div>
<div class="t" style="left:785px;top:707.47px;font-size:11.5px;line-height:11.5px;color:#444;letter-spacing:-0.3px;width:60px;text-align:center;left:755.00px;">2008</div>
<div class="t" style="left:853px;top:707.47px;font-size:11.5px;line-height:11.5px;color:#444;letter-spacing:-0.3px;width:60px;text-align:center;left:823.00px;">2009</div>
<div class="t" style="left:921px;top:707.47px;font-size:11.5px;line-height:11.5px;color:#444;letter-spacing:-0.3px;width:60px;text-align:center;left:891.00px;">2010</div>
<div class="t" style="left:989px;top:707.47px;font-size:11.5px;line-height:11.5px;color:#444;letter-spacing:-0.3px;width:60px;text-align:center;left:959.00px;">2011</div>
<div class="r" style="left:328px;top:744px;width:713px;height:15px;background:#f0f0f0"></div>
<div class="r" style="left:345px;top:746px;width:605px;height:13px;background:#c1c1c1"></div>
<svg class="r" style="left:334px;top:749px;" width="4" height="7" viewBox="0 0 4 7"><path d="M4 0V7L0 3.5Z" fill="#999"/></svg>
<svg class="r" style="left:1031px;top:749px;" width="4" height="7" viewBox="0 0 4 7"><path d="M0 0V7L4 3.5Z" fill="#444"/></svg>
<div class="t" style="left:1063px;top:126.69px;font-size:11px;line-height:11px;color:#3d7ab8;">1</div>
<div class="t" style="left:1062.5px;top:227.69px;font-size:11px;line-height:11px;color:#111;">2</div>
<div class="r" style="left:1075px;top:126px;width:166px;height:94px;border:1px solid #2a8bca;box-sizing:border-box;background:#fff"></div>
<div class="r" style="left:1076px;top:127px;width:164px;height:92px;overflow:hidden;filter:blur(0.3px)"><div class="r" style="left:0;top:0;width:1253px;height:760px;opacity:0.9;transform-origin:0 0;transform:translate(-73.58px,-14.84px) scale(0.2275,0.1392)"><div class="r" style="left:334px;top:121px;width:702px;height:1px;background:repeating-linear-gradient(90deg,#bdbdbd 0 1px,transparent 1px 3px)"></div>
<div class="r" style="left:334px;top:193px;width:702px;height:1px;background:repeating-linear-gradient(90deg,#bdbdbd 0 1px,transparent 1px 3px)"></div>
<div class="r" style="left:334px;top:122px;width:1px;height:72px;background:repeating-linear-gradient(180deg,#bdbdbd 0 1px,transparent 1px 3px)"></div>
<div class="r" style="left:1035px;top:122px;width:1px;height:72px;background:repeating-linear-gradient(180deg,#bdbdbd 0 1px,transparent 1px 3px)"></div>
<div class="t" style="left:367px;top:140.41px;font-size:32px;line-height:32px;color:#666;font-weight:700;">World Development Indicators Dashboard</div>
<div class="r" style="left:334px;top:196px;width:298px;height:1px;background:repeating-linear-gradient(90deg,#bdbdbd 0 1px,transparent 1px 3px)"></div>
<div class="r" style="left:334px;top:440px;width:298px;height:1px;background:repeating-linear-gradient(90deg,#bdbdbd 0 1px,transparent 1px 3px)"></div>
<div class="r" style="left:334px;top:197px;width:1px;height:244px;background:repeating-linear-gradient(180deg,#bdbdbd 0 1px,transparent 1px 3px)"></div>
<div class="r" style="left:338px;top:200px;width:293px;height:237px;border:1px solid #c8c8c8;box-sizing:border-box;background:#fff"></div>
<div class="t" style="left:347px;top:205.15px;font-size:14px;line-height:14px;color:#5a5a5a;font-weight:700;letter-spacing:-0.35px;">World Inflation, GDP deflator (annual %)</div>
<div class="r" style="left:340px;top:224px;width:289px;height:1px;background:linear-gradient(90deg,rgba(190,190,190,0.2),#bbb 8%,#bbb 80%,rgba(190,190,190,0))"></div>
<svg class="r" style="left:0px;top:0px;pointer-events:none" width="1253" height="760" viewBox="0 0 1253 760"><path d="M397 244.5H614" stroke="#e0e0e0" stroke-width="1"/><path d="M397 263.5H614" stroke="#e0e0e0" stroke-width="1"/><path d="M397 281.5H614" stroke="#e0e0e0" stroke-width="1"/><path d="M397 300.5H614" stroke="#e0e0e0" stroke-width="1"/><path d="M397 318.5H614" stroke="#e0e0e0" stroke-width="1"/><path d="M397 337.5H614" stroke="#e0e0e0" stroke-width="1"/><path d="M397 355.5H614" stroke="#e0e0e0" stroke-width="1"/><path d="M418.5 244V356" stroke="#e0e0e0" stroke-width="1"/><path d="M461.5 244V356" stroke="#e0e0e0" stroke-width="1"/><path d="M505.5 244V356" stroke="#e0e0e0" stroke-width="1"/><path d="M548.5 244V356" stroke="#e0e0e0" stroke-width="1"/><path d="M592.5 244V356" stroke="#e0e0e0" stroke-width="1"/><polyline points="418.3,293.3 461.3,252.4 505.3,352.8 548.3,312.8 592.3,292.4" fill="none" stroke="#4b9fd0" stroke-width="2.2" stroke-linejoin="round"/><circle cx="418.3" cy="293.3" r="3.2" fill="#fff" stroke="#4b9fd0" stroke-width="1.2"/><circle cx="461.3" cy="252.4" r="3.2" fill="#fff" stroke="#4b9fd0" stroke-width="1.2"/><circle cx="505.3" cy="352.8" r="3.2" fill="#fff" stroke="#4b9fd0" stroke-width="1.2"/><circle cx="548.3" cy="312.8" r="3.2" fill="#fff" stroke="#4b9fd0" stroke-width="1.2"/><circle cx="592.3" cy="292.4" r="3.2" fill="#fff" stroke="#4b9fd0" stroke-width="1.2"/><path d="M457.5 413.7H472.5" stroke="#4b9fd0" stroke-width="2"/><circle cx="465" cy="413.7" r="3.6" fill="#fff" stroke="#4b9fd0" stroke-width="1.3"/></svg>
<div class="t" style="left:385.5px;top:238.59px;font-size:11px;line-height:11px;color:#888;width:40px;text-align:right;left:345.50px;">8.00</div>
<div class="t" style="left:385.5px;top:257.59px;font-size:11px;line-height:11px;color:#888;width:40px;text-align:right;left:345.50px;">7.00</div>
<div class="t" style="left:385.5px;top:275.59px;font-size:11px;line-height:11px;color:#888;width:40px;text-align:right;left:345.50px;">6.00</div>
<div class="t" style="left:385.5px;top:294.59px;font-size:11px;line-height:11px;color:#888;width:40px;text-align:right;left:345.50px;">5.00</div>
<div class="t" style="left:385.5px;top:312.59px;font-size:11px;line-height:11px;color:#888;width:40px;text-align:right;left:345.50px;">4.00</div>
<div class="t" style="left:385.5px;top:331.59px;font-size:11px;line-height:11px;color:#888;width:40px;text-align:right;left:345.50px;">3.00</div>
<div class="t" style="left:385.5px;top:349.59px;font-size:11px;line-height:11px;color:#888;width:40px;text-align:right;left:345.50px;">2.00</div>
<div class="t" style="left:418.5px;top:369.69px;font-size:11px;line-height:11px;color:#888;width:40px;text-align:center;left:398.50px;">2007</div>
<div class="t" style="left:461.5px;top:369.69px;font-size:11px;line-height:11px;color:#888;width:40px;text-align:center;left:441.50px;">2008</div>
<div class="t" style="left:505.5px;top:369.69px;font-size:11px;line-height:11px;color:#888;width:40px;text-align:center;left:485.50px;">2009</div>
<div class="t" style="left:548.5px;top:369.69px;font-size:11px;line-height:11px;color:#888;width:40px;text-align:center;left:528.50px;">2010</div>
<div class="t" style="left:592.5px;top:369.69px;font-size:11px;line-height:11px;color:#888;width:40px;text-align:center;left:572.50px;">2011</div>
<div class="t" style="left:481px;top:409.49px;font-size:11px;line-height:11px;color:#777;">World</div>
<div class="r" style="left:334px;top:443px;width:298px;height:1px;background:repeating-linear-gradient(90deg,#bdbdbd 0 1px,transparent 1px 3px)"></div>
<div class="r" style="left:334px;top:737px;width:298px;height:1px;background:repeating-linear-gradient(90deg,#bdbdbd 0 1px,transparent 1px 3px)"></div>
<div class="r" style="left:334px;top:444px;width:1px;height:294px;background:repeating-linear-gradient(180deg,#bdbdbd 0 1px,transparent 1px 3px)"></div>
<div class="r" style="left:338px;top:447px;width:293px;height:287px;border:1px solid #c8c8c8;box-sizing:border-box;background:#fff"></div>
<div class="t" style="left:347px;top:452.15px;font-size:14px;line-height:14px;color:#5a5a5a;font-weight:700;letter-spacing:-0.35px;">World Communication statistics</div>
<div class="r" style="left:340px;top:471px;width:289px;height:1px;background:linear-gradient(90deg,rgba(190,190,190,0.2),#bbb 8%,#bbb 80%,rgba(190,190,190,0))"></div>
<svg class="r" style="left:0px;top:0px;pointer-events:none" width="1253" height="760" viewBox="0 0 1253 760"><path d="M452 492.5H614" stroke="#dcdcdc" stroke-width="1"/><path d="M452 508.5H614" stroke="#dcdcdc" stroke-width="1"/><path d="M452 524.5H614" stroke="#dcdcdc" stroke-width="1"/><path d="M452 540.5H614" stroke="#dcdcdc" stroke-width="1"/><path d="M452 556.5H614" stroke="#dcdcdc" stroke-width="1"/><path d="M452 572.5H614" stroke="#dcdcdc" stroke-width="1"/><path d="M452 589.5H614" stroke="#dcdcdc" stroke-width="1"/><path d="M452 605.5H614" stroke="#dcdcdc" stroke-width="1"/><path d="M452 621.5H614" stroke="#dcdcdc" stroke-width="1"/><path d="M452 637.5H614" stroke="#dcdcdc" stroke-width="1"/><path d="M452 653.5H614" stroke="#dcdcdc" stroke-width="1"/><path d="M467.5 492V653" stroke="#dcdcdc" stroke-width="1"/><path d="M500.5 492V653" stroke="#dcdcdc" stroke-width="1"/><path d="M532.5 492V653" stroke="#dcdcdc" stroke-width="1"/><path d="M565.5 492V653" stroke="#dcdcdc" stroke-width="1"/><path d="M597.5 492V653" stroke="#dcdcdc" stroke-width="1"/><rect x="456.5" y="642.5" width="7.3" height="9.5" fill="#4fa0d2" stroke="#3f8cbf" stroke-width="0.6"/><rect x="463.9" y="564.4" width="7.3" height="87.6" fill="#52c27a" stroke="#3aa862" stroke-width="0.6"/><rect x="471.3" y="573.1" width="7.3" height="78.9" fill="#e3c343" stroke="#d0a830" stroke-width="0.6"/><rect x="489.5" y="637.5" width="7.3" height="14.5" fill="#4fa0d2" stroke="#3f8cbf" stroke-width="0.6"/><rect x="496.9" y="550.1" width="7.3" height="101.9" fill="#52c27a" stroke="#3aa862" stroke-width="0.6"/><rect x="504.3" y="573.6" width="7.3" height="78.4" fill="#e3c343" stroke="#d0a830" stroke-width="0.6"/><rect x="521.5" y="633.3" width="7.3" height="18.7" fill="#4fa0d2" stroke="#3f8cbf" stroke-width="0.6"/><rect x="528.9" y="535.7" width="7.3" height="116.3" fill="#52c27a" stroke="#3aa862" stroke-width="0.6"/><rect x="536.3" y="573" width="7.3" height="79.0" fill="#e3c343" stroke="#d0a830" stroke-width="0.6"/><rect x="554.5" y="628.3" width="7.3" height="23.7" fill="#4fa0d2" stroke="#3f8cbf" stroke-width="0.6"/><rect x="561.9" y="515" width="7.3" height="137.0" fill="#52c27a" stroke="#3aa862" stroke-width="0.6"/><rect x="569.3" y="575.3" width="7.3" height="76.7" fill="#e3c343" stroke="#d0a830" stroke-width="0.6"/><rect x="586.5" y="624.1" width="7.3" height="27.9" fill="#4fa0d2" stroke="#3f8cbf" stroke-width="0.6"/><rect x="593.9" y="496.2" width="7.3" height="155.8" fill="#52c27a" stroke="#3aa862" stroke-width="0.6"/><rect x="601.3" y="577.3" width="7.3" height="74.7" fill="#e3c343" stroke="#d0a830" stroke-width="0.6"/><rect x="345" y="703" width="16" height="16" fill="#4fa0d2"/><rect x="439" y="703" width="16" height="16" fill="#52c27a"/><rect x="533" y="703" width="16" height="16" fill="#e3c343"/></svg>
<div class="t" style="left:402px;top:485.39px;font-size:11px;line-height:11px;color:#888;width:120px;text-align:center;left:342.00px;">2,200,000,000.00</div>
<div class="t" style="left:402px;top:501.55px;font-size:11px;line-height:11px;color:#888;width:120px;text-align:center;left:342.00px;">2,000,000,000.00</div>
<div class="t" style="left:402px;top:517.71px;font-size:11px;line-height:11px;color:#888;width:120px;text-align:center;left:342.00px;">1,800,000,000.00</div>
<div class="t" style="left:402px;top:533.87px;font-size:11px;line-height:11px;color:#888;width:120px;text-align:center;left:342.00px;">1,600,000,000.00</div>
<div class="t" style="left:402px;top:550.03px;font-size:11px;line-height:11px;color:#888;width:120px;text-align:center;left:342.00px;">1,400,000,000.00</div>
<div class="t" style="left:402px;top:566.19px;font-size:11px;line-height:11px;color:#888;width:120px;text-align:center;left:342.00px;">1,200,000,000.00</div>
<div class="t" style="left:402px;top:582.35px;font-size:11px;line-height:11px;color:#888;width:120px;text-align:center;left:342.00px;">1,000,000,000.00</div>
<div class="t" style="left:402px;top:598.51px;font-size:11px;line-height:11px;color:#888;width:120px;text-align:center;left:342.00px;">800,000,000.00</div>
<div class="t" style="left:402px;top:614.67px;font-size:11px;line-height:11px;color:#888;width:120px;text-align:center;left:342.00px;">600,000,000.00</div>
<div class="t" style="left:402px;top:630.83px;font-size:11px;line-height:11px;color:#888;width:120px;text-align:center;left:342.00px;">400,000,000.00</div>
<div class="t" style="left:402px;top:646.99px;font-size:11px;line-height:11px;color:#888;width:120px;text-align:center;left:342.00px;">200,000,000.00</div>
<div class="t" style="left:467.5px;top:666.69px;font-size:11px;line-height:11px;color:#888;width:40px;text-align:center;left:447.50px;">2007</div>
<div class="t" style="left:532.5px;top:666.69px;font-size:11px;line-height:11px;color:#888;width:40px;text-align:center;left:512.50px;">2009</div>
<div class="t" style="left:597.5px;top:666.69px;font-size:11px;line-height:11px;color:#888;width:40px;text-align:center;left:577.50px;">2011</div>
<div class="t" style="left:369px;top:706.69px;font-size:11px;line-height:11px;color:#888;letter-spacing:-0.4px;">Fixed broad…</div>
<div class="t" style="left:463px;top:706.69px;font-size:11px;line-height:11px;color:#888;letter-spacing:-0.2px;">Internet us…</div>
<div class="t" style="left:557px;top:706.69px;font-size:11px;line-height:11px;color:#888;letter-spacing:-0.35px;">Telephone l…</div>
<div class="r" style="left:1035px;top:198px;width:1px;height:539px;background:repeating-linear-gradient(180deg,#bdbdbd 0 1px,transparent 1px 3px)"></div>
<div class="r" style="left:634px;top:198px;width:1px;height:108px;background:repeating-linear-gradient(180deg,#bdbdbd 0 1px,transparent 1px 3px)"></div>
<div class="r" style="left:638px;top:198px;width:394px;height:539px;border:1px solid #cfcfcf;box-sizing:border-box;background:#fff"></div>
<div class="r" style="left:641px;top:201px;width:388px;height:533px;border:1px solid #777;box-sizing:border-box"></div>
<div class="r" style="left:931px;top:199px;width:88px;height:2px;background:#c4c4c4"></div>
<div class="r" style="left:1029px;top:360px;width:2px;height:125px;background:#bdbdbd"></div>
<div class="r" style="left:639px;top:418px;width:2px;height:67px;background:#bdbdbd"></div>
<div class="r" style="left:782px;top:734px;width:145px;height:2px;background:#c4c4c4"></div>
<div class="r" style="left:638px;top:198px;width:6px;height:6px;background:#8a8a8a"></div>
<div class="r" style="left:638px;top:731px;width:6px;height:6px;background:#777"></div>
<div class="r" style="left:1026px;top:731px;width:6px;height:6px;background:#666"></div>
<svg class="r" style="left:1018px;top:198px;" width="14" height="14" viewBox="0 0 14 14"><path d="M1 1H14V14Z" fill="#666"/><rect x="8" y="0" width="6" height="6" fill="#333"/></svg>
<div class="t" style="left:651px;top:205.15px;font-size:14px;line-height:14px;color:#5a5a5a;font-weight:700;letter-spacing:-0.4px;">GNI, constant LCU</div>
<div class="r" style="left:645px;top:224px;width:373px;height:1px;background:linear-gradient(90deg,rgba(190,190,190,0.2),#bbb 8%,#bbb 85%,rgba(190,190,190,0))"></div>
<svg class="r" style="left:0px;top:0px;pointer-events:none" width="1253" height="760" viewBox="0 0 1253 760"><path d="M651.3 368.4 L656.8 363.4 L660.8 362.9 L668.7 364.5 L676.6 366.8 L682.9 370.0 L686.8 366.8 L695.5 367.6 L700.3 370.0 L708.2 373.2 L712.9 372.4 L720.8 373.2 L725.5 372.4 L727.1 369.2 L730.3 372.4 L727.1 375.5 L724.7 377.9 L722.4 385.8 L723.2 392.1 L725.5 396.8 L730.3 398.4 L735.0 402.4 L737.4 407.9 L742.9 407.1 L745.3 397.6 L744.8 386.6 L747.6 391.3 L749.2 394.5 L755.5 394.5 L758.7 400.8 L761.1 403.9 L755.5 407.1 L750.0 409.5 L748.4 414.2 L742.9 420.5 L739.7 430.0 L735.8 433.9 L731.1 431.6 L725.5 433.2 L720.8 436.3 L719.2 442.6 L720.5 448.9 L716.1 447.4 L712.1 441.8 L707.4 435.5 L700.3 430.0 L696.3 423.7 L695.5 415.8 L692.4 404.7 L686.8 393.7 L682.9 388.9 L676.6 386.6 L671.1 385.0 L665.5 381.8 L660.8 387.4 L655.3 388.2 L652.1 385.0 L656.1 380.3 L654.5 374.7Z M693.2 355.8 L696.3 349.5 L697.9 351.8 L695.2 356.6Z M752.6 328.8 L757.9 324.2 L759.2 315.7 L765.8 313.0 L771.7 309.7 L778.9 307.1 L782.9 303.8 L785.5 299.9 L792.1 299.5 L796.7 299.2 L797.4 301.8 L790.8 304.5 L789.5 309.7 L794.7 308.4 L800.0 312.4 L805.3 312.4 L810.5 310.4 L803.9 317.6 L802.0 324.2 L801.3 333.4 L800.0 345.3 L794.7 351.8 L794.1 366.3 L789.5 368.9 L784.2 371.6 L780.3 379.5 L777.0 384.7 L771.7 375.5 L773.0 363.7 L768.4 351.8 L765.8 342.6 L757.9 337.4 L756.6 332.1Z M733.6 309.1 L739.5 307.1 L742.8 302.5 L747.4 303.2 L752.6 302.5 L757.2 303.2 L755.9 306.4 L750.7 309.7 L747.4 313.7 L746.1 317.6 L740.8 320.9 L739.5 318.9 L743.4 315.0 L745.4 310.4 L739.5 311.1Z M725.7 316.3 L727.6 315.7 L730.5 321.6 L727.6 321.3Z M739.5 328.2 L741.4 327.5 L740.8 332.4 L739.2 331.8Z M736.8 359.7 L742.8 357.1 L745.4 360.4 L749.3 363.7 L752.0 367.6 L753.3 370.3 L750.7 371.6 L751.3 378.2 L748.7 377.5 L748.0 371.6 L746.7 367.0 L743.4 362.4 L738.2 360.4Z M705.3 358.4 L707.9 357.1 L709.9 359.7 L713.2 361.7 L711.2 364.3 L706.6 365.0 L705.9 361.7Z M803.9 377.9 L808.6 376.8 L807.2 378.8Z M818.4 421.3 L822.6 419.7 L826.3 417.1 L827.9 410.8 L833.2 404.5 L841.6 402.4 L850.0 399.2 L853.2 395.0 L855.3 389.7 L859.5 388.7 L858.4 385.5 L852.1 385.5 L851.1 382.4 L854.2 376.1 L852.1 372.9 L847.9 373.9 L843.7 381.3 L841.6 389.7 L840.5 392.9 L836.3 385.5 L840.5 379.2 L842.6 372.9 L846.8 367.6 L854.2 364.5 L859.5 367.1 L867.4 371.8 L864.7 372.4 L859.5 370.8 L860.5 376.1 L865.8 381.3 L873.2 377.1 L881.6 370.3 L894.2 367.1 L896.8 369.2 L891.1 377.1 L888.9 386.6 L887.9 399.2 L885.8 407.6 L877.4 410.8 L873.2 416.1 L868.9 415.0 L868.9 410.8 L862.6 410.8 L856.3 411.8 L853.2 418.2 L848.9 420.3 L843.7 416.1 L839.5 412.9 L834.2 413.9 L828.9 417.1 L824.7 422.4 L820.5 425.0Z M949.5 495.5 L955.8 492.4 L960.5 488.4 L966.1 487.6 L968.0 484.5 L970.0 489.6 L973.9 490.4 L977.9 489.2 L979.5 487.2 L981.1 492.4 L987.4 498.7 L987.8 504.2 L985.0 510.5 L979.5 512.1 L976.3 508.2 L973.2 505.0 L965.3 503.0 L958.2 504.6 L951.8 507.4 L950.3 501.8Z M975.5 474.2 L977.1 474.6 L977.5 477.4 L975.9 476.6Z" fill="#ef6b76"/><path d="M895.4 374.5 L902.2 372.8 L910.8 371.1 L913.4 365.9 L909.9 362.5 L907.4 361.6 L915.1 359.1 L916.8 352.2 L921.1 346.2 L929.6 342.8 L936.4 338.6 L944.1 341.1 L943.3 345.4 L936.4 351.4 L935.6 357.4 L945.0 353.9 L951.8 353.9 L960.4 353.9 L963.8 360.8 L968.9 360.8 L977.5 357.4 L984.3 357.4 L989.5 361.6 L996.3 364.2 L1003.2 366.8 L1011.7 365.9 L1017.7 370.2 L1015.1 376.2 L1013.4 381.3 L1004.9 384.7 L1001.4 381.3 L992.9 384.7 L986.1 388.2 L979.2 389.0 L972.4 393.3 L968.1 400.1 L974.1 403.6 L972.4 410.4 L968.9 415.5 L960.4 420.7 L951.8 424.1 L949.3 429.2 L952.7 436.1 L948.4 442.9 L938.2 446.3 L940.7 456.6 L933.0 453.2 L926.2 444.6 L921.1 442.9 L914.2 446.3 L909.1 456.6 L905.3 446.8 L900.0 440.9 L892.1 439.6 L885.5 438.9 L880.3 434.3 L876.3 434.3 L878.9 441.6 L885.5 445.5 L881.6 449.5 L875.0 452.8 L871.1 449.5 L865.8 440.3 L865.1 433.7 L867.1 427.1 L857.9 425.1 L861.8 422.5 L872.4 421.6 L878.9 428.4 L885.5 428.4 L885.5 417.9 L887.9 410.0 L886.8 407.0 L890.3 395.0 L892.0 381.3Z M900.2 357.4 L901.9 355.7 L902.6 368.5 L900.5 368.0Z M994.3 397.1 L998.0 393.6 L997.2 398.4 L994.6 400.5Z M810.5 442.9 L817.1 433.7 L826.3 429.7 L834.9 429.7 L836.8 433.7 L846.1 437.0 L852.6 436.3 L859.2 438.3 L863.2 444.2 L868.4 453.4 L869.7 458.7 L877.0 460.0 L873.7 465.3 L867.1 473.2 L865.8 479.7 L867.1 486.3 L861.8 491.6 L860.5 496.8 L855.3 503.4 L848.0 507.4 L844.7 499.5 L840.8 490.3 L842.1 481.1 L838.2 471.8 L836.8 463.9 L832.9 461.3 L819.7 462.6 L813.2 457.4 L810.5 452.1Z M875.7 488.9 L877.0 489.6 L875.3 495.5 L874.3 494.5Z M741.8 470.8 L745.5 466.6 L746.6 460.3 L753.4 459.7 L760.3 462.4 L768.7 465.5 L769.2 472.9 L776.1 473.4 L786.6 477.6 L781.8 484.5 L780.3 491.8 L773.9 496.1 L770.8 501.3 L766.6 507.6 L761.8 507.1 L762.9 512.4 L757.1 515.0 L753.9 520.3 L752.9 524.5 L751.8 527.6 L750.3 532.4 L749.2 526.6 L750.8 520.3 L749.7 513.9 L751.8 502.4 L752.9 489.7 L749.7 486.1 L744.5 480.3 L741.3 475.0Z M945.5 470.3 L947.9 467.9 L949.9 466.7 L950.3 468.7 L947.5 471.1Z" fill="#9edb47"/><path d="M859.9 469.9 L863.2 468.6 L862.9 472.5 L859.9 473.4Z M855.9 474.2 L859.2 473.4 L860.5 477.8 L857.6 478.7Z M861.4 480.8 L864.7 480.4 L865.1 484.7 L861.8 485.3Z" fill="#fff"/></svg>
<div class="t" style="left:835px;top:620.64px;font-size:12px;line-height:12px;color:#888;letter-spacing:-0.15px;width:200px;text-align:center;left:735.00px;">Color: GNI. constant LCU</div>
<svg class="r" style="left:661px;top:642px;" width="16" height="16" viewBox="0 0 16 16"><circle cx="8" cy="8" r="7.3" fill="#ef6b76"/></svg>
<div class="t" style="left:680.5px;top:645.14px;font-size:12px;line-height:12px;color:#888;letter-spacing:-0.1px;">less than 75257650000000</div>
<svg class="r" style="left:829px;top:642px;" width="16" height="16" viewBox="0 0 16 16"><circle cx="8" cy="8" r="7.3" fill="#9edb47"/></svg>
<div class="t" style="left:848.5px;top:645.14px;font-size:12px;line-height:12px;color:#888;letter-spacing:-0.05px;">greater than 75257650000000</div>
<svg class="r" style="left:661px;top:663px;" width="16" height="16" viewBox="0 0 16 16"><circle cx="8" cy="8" r="7.3" fill="#e8e8e8"/></svg>
<div class="t" style="left:680.5px;top:666.14px;font-size:12px;line-height:12px;color:#888;letter-spacing:-0.2px;">No data</div>
<div class="r" style="left:655.5px;top:700.5px;width:20.5px;height:20.5px;border-radius:50%;background:#fff;box-shadow:-1px 2px 3px rgba(0,0,0,0.2)"></div>
<svg class="r" style="left:663px;top:707px;" width="9" height="9" viewBox="0 0 9 9"><path d="M0 0L8.4 4L0 8Z" fill="#999"/></svg>
<div class="r" style="left:683px;top:700px;width:340px;height:24px;border:1px solid #dcdcdc;box-sizing:border-box;background:#fff;border-radius:2px"></div>
<div class="r" style="left:750px;top:701px;width:1px;height:22px;background:#dcdcdc"></div>
<div class="r" style="left:818px;top:701px;width:1px;height:22px;background:#dcdcdc"></div>
<div class="r" style="left:886px;top:701px;width:1px;height:22px;background:#dcdcdc"></div>
<div class="r" style="left:954px;top:701px;width:1px;height:22px;background:#dcdcdc"></div>
<div class="r" style="left:955px;top:700px;width:68px;height:24px;background:#d7eaf8;border:1.5px solid #2a8bca;box-sizing:border-box;border-radius:2px"></div>
<div class="t" style="left:717px;top:707.47px;font-size:11.5px;line-height:11.5px;color:#444;letter-spacing:-0.3px;width:60px;text-align:center;left:687.00px;">2007</div>
<div class="t" style="left:785px;top:707.47px;font-size:11.5px;line-height:11.5px;color:#444;letter-spacing:-0.3px;width:60px;text-align:center;left:755.00px;">2008</div>
<div class="t" style="left:853px;top:707.47px;font-size:11.5px;line-height:11.5px;color:#444;letter-spacing:-0.3px;width:60px;text-align:center;left:823.00px;">2009</div>
<div class="t" style="left:921px;top:707.47px;font-size:11.5px;line-height:11.5px;color:#444;letter-spacing:-0.3px;width:60px;text-align:center;left:891.00px;">2010</div>
<div class="t" style="left:989px;top:707.47px;font-size:11.5px;line-height:11.5px;color:#444;letter-spacing:-0.3px;width:60px;text-align:center;left:959.00px;">2011</div></div></div>
<div class="r" style="left:1220px;top:210px;width:15px;height:3px;background:#2a8bca;border-radius:1px"></div>
<div class="r" style="left:1070px;top:195px;width:180px;height:2px;background:#fff"></div>
<div class="r" style="left:1075px;top:227px;width:166px;height:92px;border:1px solid #d0d0d0;box-sizing:border-box;background:#fff"></div>
<div class="r" style="left:1079px;top:230px;width:159px;height:10px;border:1px solid #eee;box-sizing:border-box"></div>
<div class="t" style="left:1158px;top:233.06px;font-size:5.6px;line-height:5.6px;color:#444;letter-spacing:-0.05px;width:120px;text-align:center;left:1098.00px;">World Development Indicators Dashboard</div>
<div class="r" style="left:1079px;top:241px;width:101px;height:36px;border:1px solid #ddd;box-sizing:border-box"></div>
<div class="r" style="left:1079px;top:277px;width:101px;height:41px;border:1px solid #d4d4d4;box-sizing:border-box"></div>
<div class="r" style="left:1181px;top:241px;width:56px;height:77px;border:1px solid #ddd;box-sizing:border-box"></div>
<div class="r" style="left:1080px;top:243px;width:30px;height:1px;background:#bbb"></div>
<div class="r" style="left:1080px;top:277.5px;width:25px;height:1px;background:#ccc"></div>
<svg class="r" style="left:1115px;top:244px;" width="30" height="28" viewBox="0 0 30 28"><circle cx="14.5" cy="14" r="12.2" fill="#a8d0ea" stroke="#c0c0c0" stroke-width="1"/><path d="M14.5 14V1.8A12.2 12.2 0 0 0 6 5.2Z" fill="#a9dcc2"/></svg>
<div class="r" style="left:1097.5px;top:271.8px;width:2px;height:2px;background:#2a8bca"></div>
<div class="r" style="left:1100.5px;top:272.3px;width:4px;height:1px;background:#ddd"></div>
<div class="r" style="left:1106.7px;top:271.8px;width:2px;height:2px;background:#52c27a"></div>
<div class="r" style="left:1109.7px;top:272.3px;width:4px;height:1px;background:#ddd"></div>
<div class="r" style="left:1115.9px;top:271.8px;width:2px;height:2px;background:#e3c343"></div>
<div class="r" style="left:1118.9px;top:272.3px;width:4px;height:1px;background:#ddd"></div>
<div class="r" style="left:1125.1px;top:271.8px;width:2px;height:2px;background:#e05a5a"></div>
<div class="r" style="left:1128.1px;top:272.3px;width:6px;height:1px;background:#ddd"></div>
<div class="r" style="left:1134.3px;top:271.8px;width:2px;height:2px;background:#4fa0d2"></div>
<div class="r" style="left:1137.3px;top:272.3px;width:6px;height:1px;background:#ddd"></div>
<div class="r" style="left:1143.5px;top:271.8px;width:2px;height:2px;background:#52c27a"></div>
<div class="r" style="left:1146.5px;top:272.3px;width:6px;height:1px;background:#ddd"></div>
<div class="r" style="left:1152.7px;top:271.8px;width:2px;height:2px;background:#c89060"></div>
<div class="r" style="left:1155.7px;top:272.3px;width:6px;height:1px;background:#ddd"></div>
<div class="r" style="left:1080px;top:279px;width:31px;height:6px;background:#eee"></div>
<div class="r" style="left:1111px;top:279px;width:1px;height:15px;background:#666"></div>
<div class="r" style="left:1112.0px;top:279px;width:11.5px;height:6px;background:#e4e4e4"></div>
<div class="r" style="left:1116.0px;top:281px;width:3px;height:1px;background:#aaa"></div>
<div class="r" style="left:1124.5px;top:279px;width:11.5px;height:6px;background:#efefef"></div>
<div class="r" style="left:1128.5px;top:281px;width:3px;height:1px;background:#aaa"></div>
<div class="r" style="left:1137.0px;top:279px;width:11.5px;height:6px;background:#efefef"></div>
<div class="r" style="left:1141.0px;top:281px;width:3px;height:1px;background:#aaa"></div>
<div class="r" style="left:1149.5px;top:279px;width:11.5px;height:6px;background:#efefef"></div>
<div class="r" style="left:1153.5px;top:281px;width:3px;height:1px;background:#aaa"></div>
<div class="r" style="left:1162.0px;top:279px;width:11.5px;height:6px;background:#efefef"></div>
<div class="r" style="left:1166.0px;top:281px;width:3px;height:1px;background:#aaa"></div>
<div class="r" style="left:1080px;top:285.5px;width:31px;height:2.5px;background:#ececec"></div>
<div class="r" style="left:1081px;top:286.5px;width:18px;height:1px;background:#888"></div>
<div class="r" style="left:1114.0px;top:286.5px;width:8px;height:1px;background:#b0b0b0"></div>
<div class="r" style="left:1126.5px;top:286.5px;width:8px;height:1px;background:#b0b0b0"></div>
<div class="r" style="left:1139.0px;top:286.5px;width:8px;height:1px;background:#b0b0b0"></div>
<div class="r" style="left:1151.5px;top:286.5px;width:8px;height:1px;background:#b0b0b0"></div>
<div class="r" style="left:1164.0px;top:286.5px;width:8px;height:1px;background:#b0b0b0"></div>
<div class="r" style="left:1080px;top:288.5px;width:31px;height:2.5px;background:#ececec"></div>
<div class="r" style="left:1081px;top:289.5px;width:8px;height:1px;background:#888"></div>
<div class="r" style="left:1114.0px;top:289.5px;width:8px;height:1px;background:#b0b0b0"></div>
<div class="r" style="left:1126.5px;top:289.5px;width:8px;height:1px;background:#b0b0b0"></div>
<div class="r" style="left:1139.0px;top:289.5px;width:8px;height:1px;background:#b0b0b0"></div>
<div class="r" style="left:1151.5px;top:289.5px;width:8px;height:1px;background:#b0b0b0"></div>
<div class="r" style="left:1164.0px;top:289.5px;width:8px;height:1px;background:#b0b0b0"></div>
<div class="r" style="left:1080px;top:291.5px;width:31px;height:2.5px;background:#ececec"></div>
<div class="r" style="left:1081px;top:292.5px;width:8px;height:1px;background:#888"></div>
<div class="r" style="left:1114.0px;top:292.5px;width:8px;height:1px;background:#b0b0b0"></div>
<div class="r" style="left:1126.5px;top:292.5px;width:8px;height:1px;background:#b0b0b0"></div>
<div class="r" style="left:1139.0px;top:292.5px;width:8px;height:1px;background:#b0b0b0"></div>
<div class="r" style="left:1151.5px;top:292.5px;width:8px;height:1px;background:#b0b0b0"></div>
<div class="r" style="left:1164.0px;top:292.5px;width:8px;height:1px;background:#b0b0b0"></div>
<div class="r" style="left:1181px;top:245px;width:56px;height:5px;background:#aaa"></div>
<div class="r" style="left:1181px;top:250px;width:46px;height:33px;background:#6a8c35"></div>
<div class="r" style="left:1227px;top:250px;width:9px;height:19px;background:#6a8c35;border-left:1px solid #b8c880;box-sizing:border-box"></div>
<div class="r" style="left:1227px;top:269px;width:4.5px;height:7px;background:#bcd24a"></div>
<div class="r" style="left:1231.5px;top:269px;width:4.5px;height:7px;background:#e8a848"></div>
<div class="r" style="left:1227px;top:277px;width:4.5px;height:6px;background:#eea040"></div>
<div class="r" style="left:1231.5px;top:277px;width:4.5px;height:6px;background:#ee4030"></div>
<div class="t" style="left:1204px;top:260.15px;font-size:14px;line-height:14px;color:#fff;letter-spacing:-0.3px;width:50px;text-align:center;left:1179.00px;">Asia</div>
<div class="r" style="left:1200px;top:285px;width:22px;height:1px;background:#e4e4e4"></div>
<div class="r" style="left:1200px;top:289px;width:16px;height:1px;background:#d0d0d0"></div>
<div class="r" style="left:1194px;top:291.5px;width:32px;height:1px;background:#e4e4e4"></div>
<div class="r" style="left:1190px;top:297.0px;width:2px;height:1.5px;background:#c06070"></div>
<div class="r" style="left:1193px;top:297.0px;width:30px;height:1px;background:#e6e6e6"></div>
<div class="r" style="left:1190px;top:299.3px;width:2px;height:1.5px;background:#e3c343"></div>
<div class="r" style="left:1193px;top:299.3px;width:30px;height:1px;background:#e6e6e6"></div>
<div class="r" style="left:1190px;top:301.6px;width:2px;height:1.5px;background:#e3c343"></div>
<div class="r" style="left:1193px;top:301.6px;width:30px;height:1px;background:#e6e6e6"></div>
<div class="r" style="left:1190px;top:303.9px;width:2px;height:1.5px;background:#9cdb48"></div>
<div class="r" style="left:1193px;top:303.9px;width:30px;height:1px;background:#e6e6e6"></div>
<div class="r" style="left:1190px;top:306.2px;width:2px;height:1.5px;background:#bbb"></div>
<div class="r" style="left:1193px;top:306.2px;width:30px;height:1px;background:#e6e6e6"></div>
<div class="r" style="left:1190px;top:308.5px;width:2px;height:1.5px;background:#fff"></div>
<div class="r" style="left:1193px;top:308.5px;width:30px;height:1px;background:#e6e6e6"></div>
<div class="r" style="left:1186px;top:314px;width:50px;height:2px;background:#eee"></div>
<div class="r" style="left:1226px;top:314px;width:9px;height:2px;background:#2a8bca"></div>
<div id="frame"></div>
</body></html>
